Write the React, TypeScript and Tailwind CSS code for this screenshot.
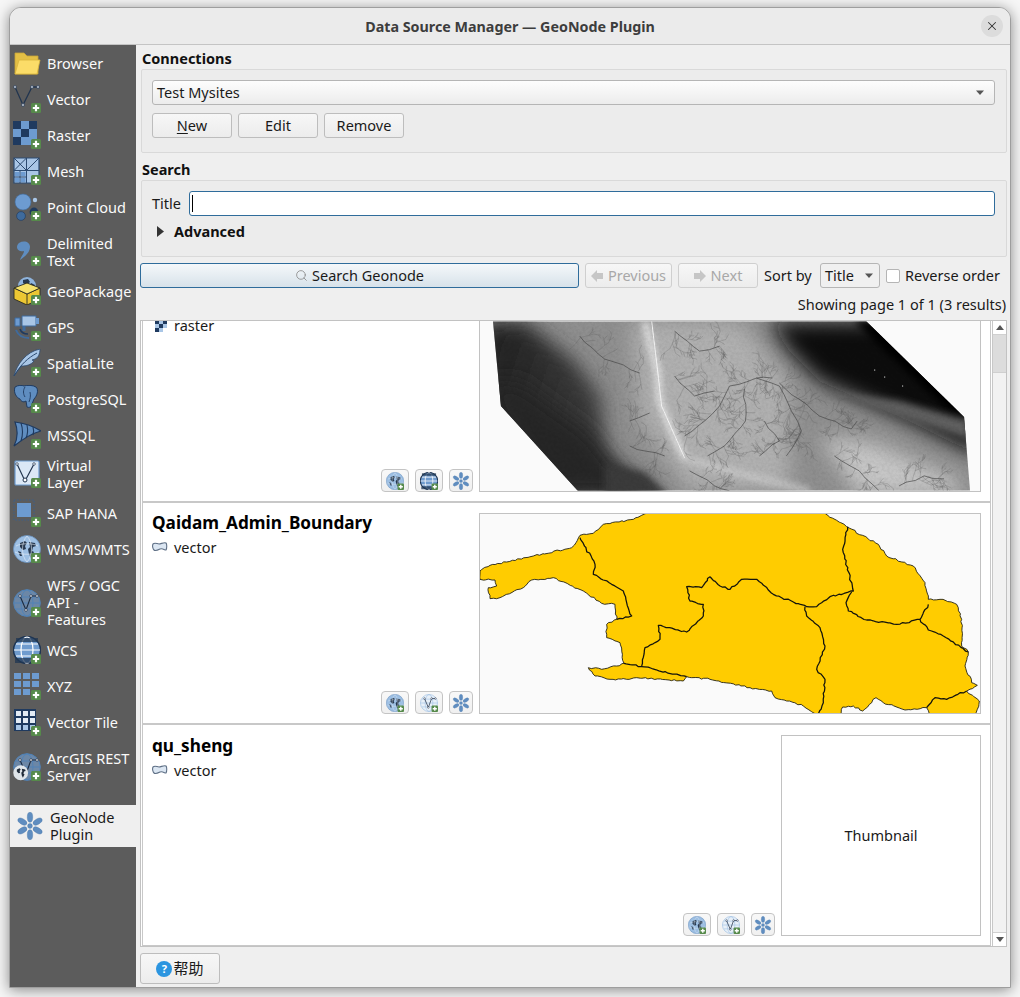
import React from "react";
import { Search, X } from "lucide-react";

/* ---------- seeded random + drawing helpers ---------- */
function makeRand(seed: number) {
  let s = seed;
  return () => {
    s = (s * 16807) % 2147483647;
    return (s - 1) / 2147483646;
  };
}

function rough(points: number[][], amp: number, seed: number) {
  const r = makeRand(seed);
  let d = `M${points[0][0]} ${points[0][1]}`;
  for (let i = 1; i < points.length; i++) {
    const [x0, y0] = points[i - 1];
    const [x1, y1] = points[i];
    const len = Math.hypot(x1 - x0, y1 - y0);
    const n = Math.max(1, Math.round(len / 9));
    for (let k = 1; k <= n; k++) {
      const t = k / n;
      const j = k === n ? 0 : amp;
      d += `L${(x0 + (x1 - x0) * t + (r() - 0.5) * j).toFixed(1)} ${(y0 + (y1 - y0) * t + (r() - 0.5) * j).toFixed(1)}`;
    }
  }
  return d;
}

function drainage() {
  const r = makeRand(4242);
  const stems: number[][][] = [
    [[293, 57], [277, 57], [250, 65], [240, 85], [225, 100], [205, 115]],
    [[277, 57], [300, 65], [312, 90], [322, 110], [307, 135]],
    [[300, 62], [340, 95], [372, 108], [378, 100]],
    [[265, 68], [266, 100], [245, 125], [228, 135]],
    [[100, 15], [125, 38], [160, 52]],
    [[150, 100], [170, 92]],
    [[150, 125], [185, 135]],
    [[210, 150], [235, 165], [250, 170]],
    [[195, 10], [220, 30], [240, 25]],
    [[420, 165], [445, 155], [465, 158]],
    [[355, 135], [380, 150], [400, 170]],
    [[195, 55], [215, 75], [235, 70]],
    [[285, 100], [300, 120], [280, 135]],
  ];
  let main = "";
  let fine = "";
  const branch = (x: number, y: number, a: number, l: number, depth: number) => {
    const n = 3;
    let px = x;
    let py = y;
    let d = `M${x.toFixed(1)} ${y.toFixed(1)}`;
    for (let i = 0; i < n; i++) {
      a += (r() - 0.5) * 0.45;
      const nx = px + (Math.cos(a) * l) / n;
      const ny = py + (Math.sin(a) * l) / n;
      d += `L${nx.toFixed(1)} ${ny.toFixed(1)}`;
      px = nx;
      py = ny;
      if (depth > 0 && r() > 0.4) branch(px, py, a + (r() > 0.5 ? 0.7 : -0.7), l * 0.58, depth - 1);
    }
    fine += d;
  };
  stems.forEach((s, si) => {
    main += rough(s, 2.500, 100 + si);
    for (let i = 1; i < s.length; i++) {
      const [x0, y0] = s[i - 1];
      const [x1, y1] = s[i];
      const base = Math.atan2(y1 - y0, x1 - x0);
      for (let k = 0; k < 6; k++) {
        const t = r();
        branch(x0 + (x1 - x0) * t, y0 + (y1 - y0) * t, base + (r() > 0.5 ? 1 : -1) * (0.8 + r() * 0.6), 9 + r() * 9, 2);
      }
    }
  });
  return { main, fine };
}

const DRAIN = drainage();

/* ---------- icons ---------- */
const Plus = () => (
  <g>
    <rect x="18" y="18" width="10" height="10" rx="1.5" fill="#568a4b" />
    <path d="M23 19.8v6.4M19.8 23h6.4" stroke="#fff" strokeWidth="2.2" />
  </g>
);

const Ico = ({ plus = true, size = 28, children }: { plus?: boolean; size?: number; children?: React.ReactNode }) => (
  <svg width={size} height={size} viewBox="0 0 28 28" className="shrink-0">
    {children}
    {plus && <Plus />}
  </svg>
);

const GlobeArt = () => (
  <g>
    <circle cx="14" cy="14" r="13.5" fill="#9dbfe3" stroke="#6a92bf" strokeWidth="0.8" />
    <path d="M7 8l5-2 2 2-2 3 1 3-3 1-3-3zM16 7l6 1 1 3-3 1-1 4 2 1-3 6-2-4-1-5 2-2zM5 16l3 1 1 4-2 0z" fill="#26384f" />
    <path d="M3 11c5-3 17-3 22 0M2 17c6 3 18 3 24 0M14 1c-6 6-6 20 0 26M14 1c6 6 6 20 0 26" fill="none" stroke="#e6eff8" strokeWidth="0.6" />
  </g>
);

const StripeGlobe = () => (
  <g>
    <circle cx="14" cy="14" r="13.5" fill="#6f9bce" stroke="#1f3552" strokeWidth="1.6" />
    <ellipse cx="14" cy="14" rx="6" ry="13" fill="none" stroke="#fff" strokeWidth="1.2" />
    <path d="M1 14h26M3 8h22M3 20h22" stroke="#fff" strokeWidth="1.2" />
    <path d="M3 2h22v4H3zM2 22h24v5H2z" fill="#1f3552" opacity="0.75" />
  </g>
);

const VGlobe = ({ light = false }: { light?: boolean }) => (
  <g>
    <circle cx="14" cy="14" r="13.3" fill={light ? "#e8f0f8" : "#6c87a6"} stroke={light ? "#9dbfe3" : "#4f82b8"} strokeWidth="1" />
    <ellipse cx="14" cy="14" rx="6" ry="13" fill="none" stroke={light ? "#9dbfe3" : "#4f82b8"} strokeWidth="0.9" />
    <path d="M1 14h26M3 8h22M3 20h22" stroke={light ? "#9dbfe3" : "#4f82b8"} strokeWidth="0.9" />
    <path d="M7 7l6 14 5-14h6" fill="none" stroke="#1c2b40" strokeWidth="1.1" />
    <circle cx="7" cy="7" r="1.3" fill="#fff" stroke="#1c2b40" strokeWidth="0.7" />
    <circle cx="13" cy="21" r="1.3" fill="#fff" stroke="#1c2b40" strokeWidth="0.7" />
    <circle cx="18" cy="7" r="1.3" fill="#fff" stroke="#1c2b40" strokeWidth="0.7" />
    <circle cx="24" cy="7" r="1.3" fill="#fff" stroke="#1c2b40" strokeWidth="0.7" />
  </g>
);

const Flower = () => (
  <g fill="#5f8dc0" stroke="#4a78aa" strokeWidth="0.4">
    {[0, 60, 120, 180, 240, 300].map((a) => (
      <ellipse key={a} cx="14" cy="5.2" rx="2.7" ry="5" transform={`rotate(${a} 14 14)`} />
    ))}
    <circle cx="14" cy="14" r="2.4" />
  </g>
);

const icons: Record<string, React.ReactNode> = {
  Browser: (
    <Ico plus={false}>
      <path d="M2 4h9l3 3h11v18H2z" fill="#e3bf45" stroke="#c8a438" strokeWidth="0.8" />
      <path d="M2 25l4-14h21l-3 14z" fill="#fbdc68" stroke="#d9b53c" strokeWidth="0.8" />
    </Ico>
  ),
  Vector: (
    <Ico>
      <path d="M2 2l8 18 9-18h6" fill="none" stroke="#22354f" strokeWidth="1.3" />
      {[[2, 2], [10, 20], [19, 2], [25, 2]].map(([x, y]) => (
        <circle key={x} cx={x} cy={y} r="1.4" fill="#e8eef5" stroke="#22354f" strokeWidth="0.8" />
      ))}
    </Ico>
  ),
  Raster: (
    <Ico>
      <path d="M0 0h8v8H0zM16 0h8v8h-8zM8 8h8v8H8zM0 16h8v8H0z" fill="#1f3a5f" />
      <path d="M8 0h8v8H8zM0 8h8v8H0zM16 8h8v8h-8zM8 16h8v8H8zM16 16h8v8h-8z" fill="#6d9bd0" />
    </Ico>
  ),
  Mesh: (
    <Ico>
      <path d="M1 1h25v25H1z" fill="#a9c6e6" stroke="#2c4a70" strokeWidth="1.2" />
      <path d="M13.5 1v25M1 13.5h25M1 1l12.5 12.5M13.5 1L1 13.5M26 1L13.5 13.5M1 20h12.5M7 13.5V26" stroke="#2c4a70" strokeWidth="1" />
      <path d="M2 15h4.500v4H2zM8 15h4.500v4H8zM2 21h4.500v4H2zM8 21h4.500v4H8z" fill="#6d9bd0" />
    </Ico>
  ),
  "Point Cloud": (
    <Ico>
      <circle cx="10" cy="9" r="8" fill="#6d9bd0" stroke="#3f6b9d" strokeWidth="0.6" />
      <circle cx="22" cy="7" r="2.200" fill="#a9c6e6" />
      <circle cx="8" cy="23" r="4.400" fill="#3f6b9d" stroke="#1f3a5f" strokeWidth="0.6" />
      <circle cx="21" cy="19" r="4.400" fill="#1f3a5f" />
    </Ico>
  ),
  "Delimited Text": (
    <Ico>
      <path d="M6 5c5-3 11-1 11 4 0 6-6 10-10 13 1-4 4-6 4-9-2 1-7 0-7-4 0-2 1-3 2-4z" fill="#5f8dc0" />
    </Ico>
  ),
  GeoPackage: (
    <Ico>
      <circle cx="14" cy="9" r="9" fill="#8fb4dd" />
      <path d="M10 3l5-1 2 3-4 3-3-2zM18 6l4 2-1 3-4-2z" fill="#26384f" />
      <path d="M1 11l13 6 13-6v11l-13 6-13-6z" fill="#ecc733" stroke="#2b2b20" strokeWidth="0.9" />
      <path d="M1 11l13-5 13 5-13 6z" fill="#f6e26b" stroke="#2b2b20" strokeWidth="0.9" />
      <path d="M14 17v11" stroke="#2b2b20" strokeWidth="0.9" />
    </Ico>
  ),
  GPS: (
    <Ico>
      <path d="M9 3h14v10H9z" fill="#a9c6e6" stroke="#3f6b9d" />
      <path d="M2 5h5v8H2z" fill="#6d9bd0" stroke="#3f6b9d" />
      <path d="M23 5h3v6h-3z" fill="#6d9bd0" />
      <path d="M11 13v5" stroke="#3f6b9d" strokeWidth="3" />
      <path d="M3 17c2 5 7 8 13 8" fill="none" stroke="#3f6b9d" strokeWidth="2" />
      <path d="M7 16c1 3 4 5 8 5" fill="none" stroke="#1f3a5f" strokeWidth="1.6" />
    </Ico>
  ),
  SpatiaLite: (
    <Ico>
      <path d="M1 27C4 15 13 3 27 0c0 5-2 9-5 10l-3 1 2 1c-3 4-8 5-12 5l-3 3z" fill="#a9c6e6" stroke="#2c4a70" strokeWidth="0.8" />
      <path d="M1 27C8 15 15 9 24 4" fill="none" stroke="#2c4a70" strokeWidth="1" />
    </Ico>
  ),
  PostgreSQL: (
    <Ico>
      <path d="M2 2c3-2 7-2 9-1 3-1 9-1 12 1 3 3 1 9-2 12l-2 5c0 3-3 4-5 3l-1-6c-3 2-5 0-6-2C4 13 0 8 2 2z" fill="#5f8dc0" stroke="#1f3a5f" strokeWidth="1" />
      <path d="M12 2c-2 3-2 7 0 10M17 7c1 4 0 7-1 10" fill="none" stroke="#1f3a5f" strokeWidth="0.9" />
    </Ico>
  ),
  MSSQL: (
    <Ico>
      <path d="M1 25C5 17 5 9 2 1c9 1 18 4 26 9-8 2-18 8-27 15z" fill="#5f8dc0" stroke="#1f3a5f" strokeWidth="1.2" />
      <path d="M8 2c2 6 2 12 0 18M14 4c1 5 1 9-1 13M20 6c1 3 1 5 0 8" fill="none" stroke="#1f3a5f" strokeWidth="1.1" />
    </Ico>
  ),
  "Virtual Layer": (
    <Ico>
      <rect x="2" y="1" width="24" height="24" rx="1" fill="#dbe8f6" stroke="#6d9bd0" strokeWidth="1.2" />
      <path d="M4 4l8 17 9-17" fill="none" stroke="#22354f" strokeWidth="1.2" />
      <circle cx="12" cy="20" r="2" fill="#fff" stroke="#22354f" />
      <circle cx="4" cy="4" r="1.300" fill="#fff" stroke="#22354f" strokeWidth="0.7" />
      <circle cx="21" cy="4" r="1.300" fill="#fff" stroke="#22354f" strokeWidth="0.7" />
    </Ico>
  ),
  "SAP HANA": (
    <Ico>
      <rect x="1" y="1" width="20" height="20" fill="none" stroke="#3a5f8a" strokeWidth="1" strokeDasharray="1.500 1.500" />
      <rect x="4" y="4" width="14" height="14" fill="#6d9bd0" />
    </Ico>
  ),
  "WMS/WMTS": (
    <Ico>
      <GlobeArt />
    </Ico>
  ),
  "WFS / OGC API - Features": (
    <Ico>
      <VGlobe />
    </Ico>
  ),
  WCS: (
    <Ico>
      <StripeGlobe />
    </Ico>
  ),
  XYZ: (
    <Ico>
      <path d="M1 1h7v6H1zM10 1h7v6h-7zM19 1h7v6h-7zM1 9h7v6H1zM10 9h7v6h-7zM19 9h7v6h-7zM1 17h7v6H1zM10 17h7v6h-7z" fill="#6d9bd0" />
    </Ico>
  ),
  "Vector Tile": (
    <Ico>
      <path d="M1 1h22v22H1z" fill="#1f3a5f" />
      <path d="M3 3h5v5H3zM10 3h5v5h-5zM17 3h5v5h-5zM3 10h5v5H3zM10 10h5v5h-5zM17 10h5v5h-5z" fill="#e3ebf4" />
      <path d="M3 17h5v5H3zM10 17h5v5h-5zM17 17h5v5h-5z" fill="#a9c6e6" />
    </Ico>
  ),
  "ArcGIS REST Server": (
    <Ico>
      <VGlobe />
      <g transform="translate(0 12) scale(0.55)">
        <circle cx="14" cy="14" r="13.5" fill="#dfe5ea" />
        <path d="M7 8l5-2 2 2-2 3 1 3-3 1-3-3zM16 7l6 1 1 3-3 1-1 4 2 1-3 6-2-4-1-5 2-2z" fill="#1f2a38" />
      </g>
    </Ico>
  ),
};

/* ---------- sidebar ---------- */
const nav: { label: string; key: string; cls: string }[] = [
  { key: "Browser", label: "Browser", cls: "h-[36px]" },
  { key: "Vector", label: "Vector", cls: "h-[36px]" },
  { key: "Raster", label: "Raster", cls: "h-[36px]" },
  { key: "Mesh", label: "Mesh", cls: "h-[36px]" },
  { key: "Point Cloud", label: "Point Cloud", cls: "h-[36px]" },
  { key: "Delimited Text", label: "Delimited\nText", cls: "h-[42px] mt-[6px]" },
  { key: "GeoPackage", label: "GeoPackage", cls: "h-[36px]" },
  { key: "GPS", label: "GPS", cls: "h-[36px]" },
  { key: "SpatiaLite", label: "SpatiaLite", cls: "h-[36px]" },
  { key: "PostgreSQL", label: "PostgreSQL", cls: "h-[36px]" },
  { key: "MSSQL", label: "MSSQL", cls: "h-[36px]" },
  { key: "Virtual Layer", label: "Virtual\nLayer", cls: "h-[42px]" },
  { key: "SAP HANA", label: "SAP HANA", cls: "h-[36px]" },
  { key: "WMS/WMTS", label: "WMS/WMTS", cls: "h-[36px]" },
  { key: "WFS / OGC API - Features", label: "WFS / OGC\nAPI -\nFeatures", cls: "h-[59px] mt-[6px]" },
  { key: "WCS", label: "WCS", cls: "h-[36px]" },
  { key: "XYZ", label: "XYZ", cls: "h-[36px]" },
  { key: "Vector Tile", label: "Vector Tile", cls: "h-[36px]" },
  { key: "ArcGIS REST Server", label: "ArcGIS REST\nServer", cls: "h-[42px] mt-[6px]" },
];

const Sidebar = () => (
  <div className="w-[126px] shrink-0 bg-[#5c5c5c] flex flex-col text-[#fafafa]">
    {nav.map((n) => (
      <div key={n.key} className={`flex items-center pl-[3px] gap-[6px] ${n.cls}`}>
        {icons[n.key]}
        <span className="whitespace-pre-line">{n.label}</span>
      </div>
    ))}
    <div className="mt-[17px] h-[42px] bg-[#efefef] text-[#1a1a1a] flex items-center pl-[6px] gap-[6px]">
      <Ico plus={false}>
        <Flower />
      </Ico>
      <span className="whitespace-pre-line">{"GeoNode\nPlugin"}</span>
    </div>
  </div>
);

/* ---------- small widgets ---------- */
const Btn = ({ className = "", children }: { className?: string; children?: React.ReactNode }) => (
  <div className={`h-[25px] border border-[#bdbdbd] rounded-[3px] bg-gradient-to-b from-[#f7f7f7] to-[#ececec] flex items-center justify-center text-[#1a1a1a] ${className}`}>
    {children}
  </div>
);

const Caret = () => (
  <svg width="10" height="6" viewBox="0 0 10 6" className="shrink-0">
    <path d="M1 0.500h8L5 5z" fill="#555" />
  </svg>
);

const GroupTitle = ({ className = "", children }: { className?: string; children?: React.ReactNode }) => (
  <div className={`font-bold ml-[2px] text-[#111] leading-[19px] pb-px ${className}`}>{children}</div>
);

const ActionBtn = ({ w = "w-[28px]", children }: { w?: string; children?: React.ReactNode }) => (
  <div className={`${w} h-[23px] border border-[#c4c4c4] rounded-[4px] bg-gradient-to-b from-[#f8f8f8] to-[#f0f0f0] flex items-center justify-center`}>
    {children}
  </div>
);

const Actions = ({ second }: { second: "wcs" | "wfs" }) => (
  <div className="mt-auto flex justify-end gap-[6px]">
    <ActionBtn>
      <Ico size={18}>
        <GlobeArt />
      </Ico>
    </ActionBtn>
    <ActionBtn>
      <Ico size={18}>{second === "wcs" ? <StripeGlobe /> : <VGlobe light />}</Ico>
    </ActionBtn>
    <ActionBtn w="w-[24px]">
      <Ico size={18} plus={false}>
        <Flower />
      </Ico>
    </ActionBtn>
  </div>
);

const VectorType = () => (
  <div className="flex items-center gap-[6px] h-[18px] text-[#1a1a1a]">
    <svg width="16" height="12" viewBox="0 0 16 12" className="shrink-0">
      <path d="M1 3c2-2 4 0 6 0s5-2 7-1c1 1 1 5 0 7-2 0-3-2-6-1-2 1-5 2-6 1S0 5 1 3z" fill="#dbe6f2" stroke="#5e6f85" strokeWidth="1.100" />
    </svg>
    <span>vector</span>
  </div>
);

const RasterType = () => (
  <div className="flex items-center gap-[6px] h-[18px] -mt-[5px] text-[#1a1a1a]">
    <svg width="16" height="14" viewBox="0 0 16 14" className="shrink-0">
      <path d="M3 2h4v4H3zM11 2h4v4h-4zM7 6h4v4H7zM3 10h4v4H3z" fill="#1f3a5f" />
      <path d="M7 2h4v4H7zM3 6h4v4H3zM11 6h4v4h-4zM7 10h4v4H7z" fill="#a9c6e6" />
    </svg>
    <span>raster</span>
  </div>
);

/* ---------- thumbnails ---------- */
const Dem = () => {
  const poly = "13,0 21,85 98,170 491,170 485,96 387,0";
  return (
    <svg viewBox="0 0 501 170" width="500" height="170" className="block">
      <defs>
        <clipPath id="demClip">
          <polygon points={poly} />
        </clipPath>
        <filter id="b10" x="-20%" y="-20%" width="140%" height="140%">
          <feGaussianBlur stdDeviation="10" />
        </filter>
        <filter id="b4" x="-20%" y="-20%" width="140%" height="140%">
          <feGaussianBlur stdDeviation="3.500" />
        </filter>
        <filter id="grain" x="0" y="0" width="100%" height="100%">
          <feTurbulence type="fractalNoise" baseFrequency="0.35" numOctaves="3" seed="7" />
          <feColorMatrix values="0 0 0 0 0  0 0 0 0 0  0 0 0 0 0  1.400 0 0 0 -0.500" />
        </filter>
        <linearGradient id="leftDark" x1="0" y1="0" x2="1" y2="0.3">
          <stop offset="0" stopColor="#1e1e1e" />
          <stop offset="1" stopColor="#4a4a4a" />
        </linearGradient>
      </defs>
      <g clipPath="url(#demClip)">
        <rect width="501" height="170" fill="#8f8f8f" />
        <polygon points="150,0 260,0 310,60 310,170 210,170 160,100" fill="#b0b0b0" filter="url(#b10)" />
        <polygon points="0,0 45,0 95,40 122,76 126,135 187,175 0,175" fill="url(#leftDark)" filter="url(#b10)" />
        <polygon points="0,60 40,60 110,110 160,175 60,175" fill="#262626" filter="url(#b10)" />
        <polygon points="290,0 420,0 501,90 501,135 430,100 340,60 310,30" fill="#111" filter="url(#b10)" />
        <polygon points="375,0 420,0 501,100 470,90" fill="#000" filter="url(#b4)" />
        <polygon points="340,70 420,95 490,118 490,100 420,80" fill="#606060" filter="url(#b4)" />
        <polygon points="340,115 395,122 480,160 480,175 380,175" fill="#c6c6c6" filter="url(#b10)" />
        <path d="M165 0L172 28 178 50 180 80 192 110 205 138" fill="none" stroke="#f0f0f0" strokeWidth="5" filter="url(#b4)" />
        <path d="M172 0L178 50 182 85 205 137" fill="none" stroke="#f4f4f4" strokeWidth="1" />
        <path d="M205 138L270 155 330 170" fill="none" stroke="#d0d0d0" strokeWidth="5" filter="url(#b4)" />
        <polygon points="125,142 165,152 190,175 125,175" fill="#3a3a3a" filter="url(#b4)" />
        <path d={DRAIN.fine} fill="none" stroke="#5a5a5a" strokeWidth="0.5" opacity="0.5" />
        <path d={DRAIN.main} fill="none" stroke="#4a4a4a" strokeWidth="1" opacity="0.7" />
        <rect width="501" height="170" filter="url(#grain)" opacity="0.08" />
      </g>
      <path d="M395 49h1M405 56h1M423 65h1" stroke="#fff" strokeWidth="1" />
    </svg>
  );
};

const outline: number[][] = [
  [30, 195], [60, 178], [110, 168], [190, 150], [305, 125], [318, 110], [330, 88], [370, 82], [400, 55], [490, 40], [545, 14],
  [1050, 14], [1065, 22], [1130, 62], [1225, 115], [1250, 150], [1330, 180], [1365, 230], [1375, 280], [1410, 280], [1460, 295], [1475, 340],
  [1475, 420], [1495, 438], [1485, 480], [1505, 530], [1522, 538], [1490, 555], [1528, 585], [1518, 630], [1385, 630], [1370, 605],
  [1305, 612], [1240, 590], [1218, 575], [1178, 615], [1150, 600], [1118, 603], [1110, 630], [1045, 630], [1000, 600], [950, 585],
  [915, 575], [905, 555], [840, 545], [720, 520], [650, 512], [640, 525], [500, 515], [470, 520], [420, 520], [375, 510], [355, 485],
  [395, 490], [440, 480], [462, 472], [450, 410], [410, 395], [410, 355], [440, 340], [435, 295], [395, 292], [340, 255], [250, 215],
  [185, 222], [160, 245], [90, 275], [60, 278], [55, 245], [80, 240], [75, 222], [30, 220], [30, 195],
];

const inner: number[][][] = [
  [[330, 95], [375, 175], [370, 205], [425, 235], [460, 255], [485, 330], [440, 340]],
  [[720, 212], [750, 240], [780, 250], [815, 220], [860, 220], [910, 265], [970, 288], [1010, 302], [1040, 302], [1080, 272], [1150, 255], [1118, 130], [1133, 62]],
  [[720, 212], [695, 245], [650, 242], [660, 285], [700, 295], [700, 330], [650, 378], [565, 358], [570, 400], [525, 425], [515, 480]],
  [[462, 472], [515, 482], [650, 512]],
  [[1005, 302], [1010, 330], [1050, 365], [1065, 420], [1040, 490], [1065, 520], [1060, 590], [1045, 624]],
  [[1145, 258], [1128, 290], [1135, 315], [1190, 342], [1280, 355], [1350, 340], [1375, 295]],
  [[1350, 340], [1375, 372], [1420, 390], [1495, 438]],
  [[1370, 605], [1395, 575], [1430, 580], [1490, 555]],
];

const BoundaryMap = () => (
  <svg viewBox="30 24 1500 597" width="500" height="199" className="block">
    <path d={rough(outline, 5, 11) + "Z"} fill="#ffcc00" stroke="#1a1a10" strokeWidth="2.600" strokeLinejoin="round" />
    {inner.map((p, i) => (
      <path key={i} d={rough(p, 5, 31 + i)} fill="none" stroke="#14140c" strokeWidth="3.800" strokeLinejoin="round" />
    ))}
  </svg>
);

/* ---------- main ---------- */
const Content = () => (
  <div className="flex-1 min-w-0 flex flex-col pl-[4px] pr-[3px] pt-[4px] bg-[#efefef]">
    <GroupTitle>Connections</GroupTitle>
    <div className="ml-px h-[84px] border border-[#d9d9d9] rounded-[2px] bg-[#ececec] pt-[10px] pl-[10px] pr-[11px]">
      <div className="h-[25px] border border-[#b5b5b5] rounded-[3px] bg-gradient-to-b from-[#fdfdfd] to-[#ececec] flex items-center justify-between pl-[4px] pr-[9px] text-[#1a1a1a]">
        <span>Test Mysites</span>
        <Caret />
      </div>
      <div className="flex gap-[6px] mt-[8px]">
        <Btn className="w-[80px]">
          <span>
            <span className="underline underline-offset-2">N</span>ew
          </span>
        </Btn>
        <Btn className="w-[80px]">Edit</Btn>
        <Btn className="w-[80px]">Remove</Btn>
      </div>
    </div>

    <GroupTitle className="pt-[7px]">Search</GroupTitle>
    <div className="ml-px h-[77px] border border-[#d9d9d9] rounded-[2px] bg-[#ececec] pt-[10px] pl-[10px] pr-[11px]">
      <div className="flex items-center gap-[8px]">
        <span className="text-[#1a1a1a]">Title</span>
        <div className="flex-1 h-[25px] border border-[#2f6c9b] rounded-[3px] bg-white flex items-center pl-[2px]">
          <div className="w-px h-[17px] bg-black" />
        </div>
      </div>
      <div className="flex items-center mt-[6px] h-[18px] pl-[5px] gap-[10px]">
        <svg width="7" height="11" viewBox="0 0 7 11" className="shrink-0">
          <path d="M0 0l7 5.500L0 11z" fill="#333" />
        </svg>
        <span className="font-bold text-[#111]">Advanced</span>
      </div>
    </div>

    <div className="flex items-center mt-[6px] h-[25px]">
      <div className="w-[439px] h-[25px] border border-[#2f6c9b] rounded-[3px] bg-gradient-to-b from-[#f5f8fa] to-[#d7e2ea] flex items-center justify-center gap-[4px] text-[#1a1a1a]">
        <Search size={13} strokeWidth={1.5} color="#888" />
        <span>Search Geonode</span>
      </div>
      <Btn className="w-[87px] ml-[6px] gap-[5px] text-[#a8a8a8] border-[#cfcfcf]">
        <svg width="12" height="12" viewBox="0 0 12 12">
          <path d="M0 6l6-6v3h6v6H6v3z" fill="#c6c6c6" />
        </svg>
        <span>Previous</span>
      </Btn>
      <Btn className="w-[80px] ml-[6px] gap-[5px] text-[#a8a8a8] border-[#cfcfcf]">
        <svg width="12" height="12" viewBox="0 0 12 12">
          <path d="M12 6L6 0v3H0v6h6v3z" fill="#c6c6c6" />
        </svg>
        <span>Next</span>
      </Btn>
      <span className="ml-[6px] w-[50px] whitespace-nowrap text-[#1a1a1a]">Sort by</span>
      <div className="ml-[6px] w-[60px] h-[25px] border border-[#b5b5b5] rounded-[3px] bg-[#f0f0f0] flex items-center justify-between pl-[4px] pr-[5px] text-[#1a1a1a]">
        <span>Title</span>
        <Caret />
      </div>
      <div className="ml-[6px] w-[14px] h-[14px] border border-[#b5b5b5] rounded-[2px] bg-white" />
      <span className="ml-[5px] text-[#1a1a1a] whitespace-nowrap">Reverse order</span>
    </div>

    <div className="h-[32px] flex items-center justify-end pr-px text-[#1a1a1a]">Showing page 1 of 1 (3 results)</div>

    <div className="h-[627px] border border-[#c2c2c2] bg-white flex overflow-hidden">
      <div className="w-[849px] ml-px flex flex-col">
        <div className="h-[181px] border-x border-b border-[#c8c8c8] px-[9px] pb-[9px] flex gap-[6px] overflow-hidden">
          <div className="flex-1 min-w-0 flex flex-col">
            <RasterType />
            <Actions second="wcs" />
          </div>
          <div className="w-[502px] h-[171px] border-x border-b border-[#c2c2c2] bg-[#fafafa]">
            <Dem />
          </div>
        </div>
        <div className="h-[222px] border border-[#c8c8c8] px-[9px] pt-[10px] pb-[9px] flex gap-[6px]">
          <div className="flex-1 min-w-0 flex flex-col">
            <div className="font-bold text-[17.2px] leading-[20px] text-black">Qaidam_Admin_Boundary</div>
            <div className="mt-[5px]">
              <VectorType />
            </div>
            <Actions second="wfs" />
          </div>
          <div className="w-[502px] h-[201px] border border-[#c2c2c2] bg-[#fafafa]">
            <BoundaryMap />
          </div>
        </div>
        <div className="h-[222px] border border-[#c8c8c8] px-[9px] pt-[10px] pb-[9px] flex gap-[6px]">
          <div className="flex-1 min-w-0 flex flex-col pt-px">
            <div className="font-bold text-[17.2px] leading-[20px] text-black">qu_sheng</div>
            <div className="mt-[5px]">
              <VectorType />
            </div>
            <Actions second="wfs" />
          </div>
          <div className="w-[200px] h-[201px] border border-[#c2c2c2] bg-white flex items-center justify-center text-[#1a1a1a]">Thumbnail</div>
        </div>
      </div>
      <div className="ml-auto w-[14px] border-l border-[#c8c8c8] bg-[#f2f2f2] flex flex-col">
        <div className="h-[14px] border-b border-[#d0d0d0] bg-white flex items-center justify-center">
          <svg width="8" height="5" viewBox="0 0 8 5">
            <path d="M0 5l4-5 4 5z" fill="#555" />
          </svg>
        </div>
        <div className="h-[38px] bg-[#dcdcdc] border-b border-[#cfcfcf]" />
        <div className="flex-1" />
        <div className="h-[14px] border-t border-[#d0d0d0] bg-white flex items-center justify-center">
          <svg width="8" height="5" viewBox="0 0 8 5">
            <path d="M0 0l4 5 4-5z" fill="#555" />
          </svg>
        </div>
      </div>
    </div>

    <div className="h-[40px] pt-[6px]">
      <div className="w-[80px] h-[31px] border border-[#bdbdbd] rounded-[3px] bg-gradient-to-b from-[#f7f7f7] to-[#ececec] flex items-center justify-center gap-[1px] text-[#1a1a1a] text-[15px]">
        <span className="w-[16px] h-[16px] rounded-full bg-[#2b95e0] text-white text-[11px] font-bold flex items-center justify-center">?</span>
        <span>帮助</span>
      </div>
    </div>
  </div>
);

export default function App() {
  return (
    <div className="w-[1020px] h-[997px] bg-[#f6f6f6] pt-[7px] pl-[9px] overflow-hidden text-[14.5px] leading-[17px] [font-family:'Noto_Sans','Noto_Sans_CJK_SC',sans-serif]">
      <div className="w-[1002px] h-[981px] rounded-t-[12px] overflow-hidden border border-[#9e9e9e] shadow-[0_2px_14px_rgba(0,0,0,0.45)] flex flex-col bg-[#efefef]">
        <div className="h-[37px] shrink-0 bg-[#ebebeb] border-b border-[#c4c4c4] flex items-center relative">
          <div className="w-full text-center font-bold text-[14.3px] text-[#3d3d3d]">Data Source Manager — GeoNode Plugin</div>
          <div className="absolute right-[7px] top-[7px] w-[22px] h-[22px] rounded-full bg-[#dcdcdc] flex items-center justify-center">
            <X size={14} strokeWidth={1.75} color="#333" />
          </div>
        </div>
        <div className="flex flex-1 min-h-0">
          <Sidebar />
          <Content />
        </div>
      </div>
    </div>
  );
}
